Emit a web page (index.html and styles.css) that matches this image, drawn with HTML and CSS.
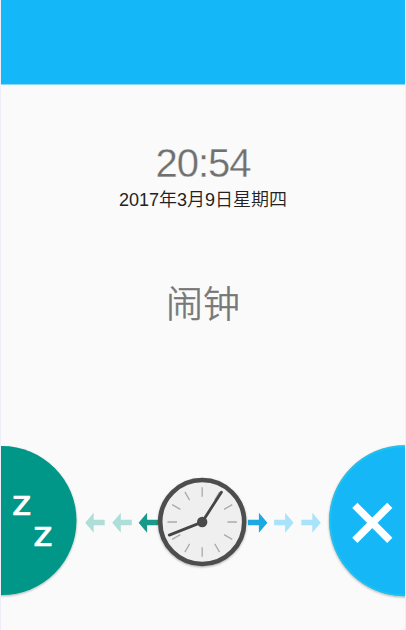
FILE: index.html
```
<!DOCTYPE html>
<html lang="zh-CN">
<head>
<meta charset="utf-8">
<title>闹钟</title>
<link rel="stylesheet" href="styles.css">
</head>
<body>
<main class="screen">
  <header class="bar"></header>
  <section class="info">
    <div class="time">20:54</div>
    <div class="date">2017年3月9日星期四</div>
    <h1 class="label">闹钟</h1>
  </section>
  <svg class="slider" viewBox="1 430 404 200">
    <defs>
      <filter id="shadow" x="-20%" y="-20%" width="140%" height="140%">
        <feDropShadow dx="0" dy="1" stdDeviation="1.2" flood-color="#000" flood-opacity=".3"/>
      </filter>
      <path id="arrow" d="M0 0 8.5-10V-3H19.5V2.4H8.5V10Z"/>
    </defs>
    <circle cx="2" cy="520.6" r="74.5" fill="#049688" filter="url(#shadow)"/>
    <g class="snooze">
      <text x="12.4" y="514.9" textLength="18.4" lengthAdjust="spacingAndGlyphs">Z</text>
      <text x="33.8" y="545.8" textLength="18.4" lengthAdjust="spacingAndGlyphs">Z</text>
    </g>
    <g fill="#aeded8">
      <use href="#arrow" x="85.2" y="522.8"/>
      <use href="#arrow" x="112.3" y="522.8"/>
    </g>
    <use href="#arrow" x="138.6" y="522.8" fill="#189a8b"/>
    <use href="#arrow" transform="translate(267.4 522.8) scale(-1 1)" fill="#1aa9e1"/>
    <g fill="#a8e3fa">
      <use href="#arrow" transform="translate(293.6 522.8) scale(-1 1)"/>
      <use href="#arrow" transform="translate(320.8 522.8) scale(-1 1)"/>
    </g>
    <circle cx="202.2" cy="522" r="42" fill="#efefef" stroke="#4d4d4d" stroke-width="4.6" filter="url(#shadow)"/>
    <g stroke="#ababab" stroke-width="1.3">
      <path id="ticks" d="M202.2 487.3v9.5M202.2 547.2v9.5M167.5 522h9.5M227.4 522h9.5"/>
      <use href="#ticks" transform="rotate(30 202.2 522)"/>
      <use href="#ticks" transform="rotate(60 202.2 522)"/>
    </g>
    <path d="M221.4 492.2 202.2 522 169.3 535.1" fill="none" stroke="#454545" stroke-width="2.8" stroke-linecap="round"/>
    <circle cx="202.2" cy="522" r="5.2" fill="#4a4a4a"/>
    <circle cx="404.5" cy="520.8" r="75.2" fill="#14b7f7" stroke="#55a9c4" stroke-width=".8" filter="url(#shadow)"/>
    <circle cx="404.5" cy="520.8" r="74.1" fill="none" stroke="#17c5f4" stroke-width="1.4"/>
    <path d="M354.8 505.3 389.8 540.3M389.8 505.3 354.8 540.3" fill="none" stroke="#fff" stroke-width="7.4"/>
  </svg>
</main>
</body>
</html>
```

FILE: styles.css
```
body {
  margin: 0;
  background: #fafafa;
}

.screen {
  box-sizing: border-box;
  display: flex;
  flex-direction: column;
  width: 406px;
  height: 630px;
  overflow: hidden;
  border: solid #eceffa;
  border-width: 0 1px;
  background: #fafafa;
  font-family: "Liberation Sans", "Noto Sans CJK SC", sans-serif;
}

.bar {
  flex: none;
  box-sizing: border-box;
  height: 85px;
  border-bottom: 1px solid #8cdaf7;
  background: #14b7f7;
}

.info {
  flex: 1;
  display: flex;
  flex-direction: column;
  align-items: center;
  padding-top: 53px;
  color: #777;
}

.time {
  color: #707070;
  font-size: 40px;
  letter-spacing: -1px;
  line-height: 50px;
  -webkit-text-stroke: .3px #fafafa;
}

.date {
  color: #222;
  font-size: 18px;
  font-weight: 350;
  line-height: 24px;
}

.label {
  margin: 71px 0 0;
  font-size: 37px;
  font-weight: 300;
  line-height: 46px;
  -webkit-text-stroke: .6px #777;
}

.slider {
  flex: none;
  display: block;
  width: 404px;
  height: 200px;
}

.snooze {
  fill: #fff;
  stroke: #fff;
  stroke-width: .5px;
  font: 600 27.5px "Open Sans", sans-serif;
}
```
